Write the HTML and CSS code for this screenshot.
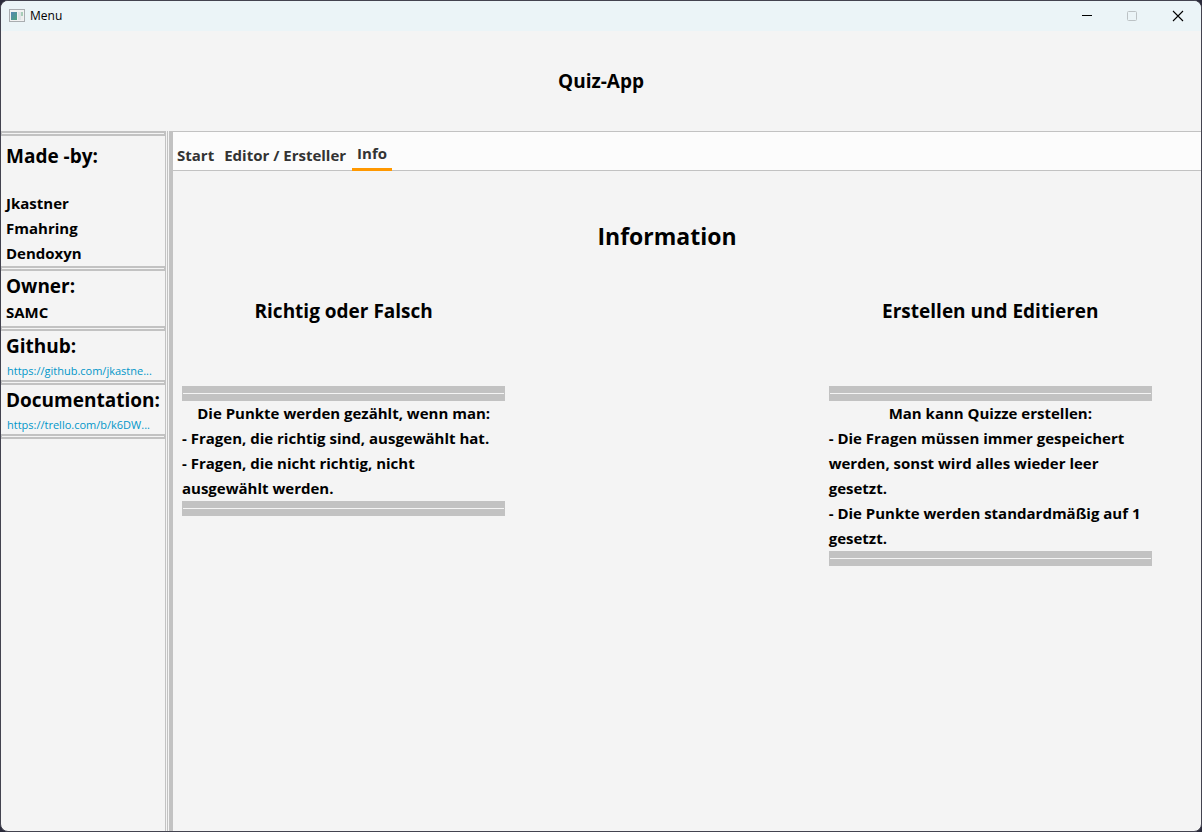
FILE: index.html
```
<!DOCTYPE html>
<html lang="de">
<head>
<meta charset="utf-8">
<title>Menu</title>
<link rel="stylesheet" href="styles.css">
</head>
<body>
<div class="window">
  <header class="titlebar">
    <svg class="app-icon" width="16" height="14" viewBox="0 0 16 14" aria-hidden="true">
      <defs><linearGradient id="pane" x1="0" y1="0" x2="1" y2="1"><stop offset="0" stop-color="#5586b4"/><stop offset="1" stop-color="#4fa27c"/></linearGradient></defs>
      <rect x="0.5" y="0.5" width="15" height="12" fill="#f2f2f2" stroke="#a9adb0"/>
      <rect x="2" y="3" width="6" height="8" fill="url(#pane)"/>
      <rect x="9" y="3" width="3" height="8" fill="#dfe3e6"/>
      <rect x="12" y="3" width="2" height="4" fill="#a8cdb8"/>
      <rect x="12" y="7" width="2" height="4" fill="#ededed"/>
    </svg>
    <span class="window-title">Menu</span>
    <div class="controls">
      <button class="control" aria-label="Minimieren"><svg width="12" height="12" viewBox="0 0 12 12"><path d="M2 5.5h10" stroke="#000"/></svg></button>
      <button class="control" aria-label="Maximieren" disabled><svg width="12" height="12" viewBox="0 0 12 12"><rect x="1.5" y="1.5" width="9" height="9" rx="1" fill="none" stroke="#bcc2c5"/></svg></button>
      <button class="control" aria-label="Schließen"><svg width="12" height="12" viewBox="0 0 12 12"><path d="M1 1l10 10M11 1L1 11" stroke="#000" stroke-width="1.1"/></svg></button>
    </div>
  </header>
  <div class="banner"><h1 class="heading">Quiz-App</h1></div>
  <div class="split">
    <aside class="sidebar">
      <div class="rule"></div>
      <section class="made">
        <h2 class="heading">Made -by:</h2>
        <p class="text">Jkastner</p>
        <p class="text">Fmahring</p>
        <p class="text">Dendoxyn</p>
      </section>
      <div class="rule"></div>
      <section class="block">
        <h2 class="heading">Owner:</h2>
        <p class="text">SAMC</p>
      </section>
      <div class="rule"></div>
      <section class="block">
        <h2 class="heading">Github:</h2>
        <a class="link" href="#github">https://github.com/jkastne...</a>
      </section>
      <div class="rule"></div>
      <section class="block">
        <h2 class="heading">Documentation:</h2>
        <a class="link" href="#trello">https://trello.com/b/k6DW...</a>
      </section>
      <div class="rule"></div>
    </aside>
    <div class="divider"></div>
    <main class="content">
      <nav class="tabs" role="tablist">
        <button class="tab" role="tab">Start</button>
        <button class="tab" role="tab">Editor / Ersteller</button>
        <button class="tab active" role="tab" aria-selected="true">Info</button>
      </nav>
      <div class="panel">
        <h2 class="page-title">Information</h2>
        <section class="column first">
          <h3 class="heading column-title">Richtig oder Falsch</h3>
          <div class="bar"></div>
          <p class="text lead">Die Punkte werden gezählt, wenn man:</p>
          <p class="text">- Fragen, die richtig sind, ausgewählt hat.</p>
          <p class="text">- Fragen, die nicht richtig, nicht<br>ausgewählt werden.</p>
          <div class="bar"></div>
        </section>
        <section class="column last">
          <h3 class="heading column-title">Erstellen und Editieren</h3>
          <div class="bar"></div>
          <p class="text lead">Man kann Quizze erstellen:</p>
          <p class="text">- Die Fragen müssen immer gespeichert<br>werden, sonst wird alles wieder leer<br>gesetzt.</p>
          <p class="text">- Die Punkte werden standardmäßig auf 1<br>gesetzt.</p>
          <div class="bar"></div>
        </section>
      </div>
    </main>
  </div>
</div>
</body>
</html>
```
FILE: styles.css
```
* { box-sizing: border-box; }
body {
  margin: 0;
  background: #2b2b3b;
  color: #000;
  font-family: "Open Sans", "Noto Sans", sans-serif;
}
h1, h2, h3, p { margin: 0; }
button { border: 0; background: none; padding: 0; font-family: inherit; }
.window {
  display: flex;
  flex-direction: column;
  min-height: 100vh;
  border: 1px solid #43434f;
  border-radius: 8px;
  background: #f4f4f4;
  overflow: hidden;
}
.titlebar {
  display: flex;
  align-items: center;
  height: 30px;
  padding-left: 8px;
  background: #ebf4f7;
}
.window-title { margin-left: 5px; font-size: 12px; line-height: 16px; }
.controls { display: flex; margin-left: auto; }
.control {
  display: flex;
  align-items: center;
  justify-content: center;
  width: 46px;
  height: 28px;
}
.banner {
  display: flex;
  align-items: center;
  justify-content: center;
  height: 100px;
}
.heading { font-size: 19px; line-height: 27px; font-weight: 700; }
.text { font-size: 15px; line-height: 25px; font-weight: 700; white-space: nowrap; }
.split { display: flex; flex: 1; }
.sidebar { width: 164px; }
.rule {
  height: 5px;
  border: solid #c2c2c2;
  border-width: 2px 1px;
  background: #f4f4f4;
}
.made { padding: 7px 5px 0; }
.made .heading { margin-bottom: 21px; }
.block { padding: 2px 5px 1px; }
.block .heading { white-space: nowrap; }
.link {
  display: block;
  padding: 2px 1px 0;
  color: #0096c9;
  font-size: 11px;
  line-height: 17px;
  text-decoration: none;
  white-space: nowrap;
}
.divider {
  width: 8px;
  background: linear-gradient(90deg, #c2c2c2 1px, #f4f4f4 1px 2px, #c2c2c2 2px 3px, #f4f4f4 3px 4px, #c2c2c2 4px);
}
.content { flex: 1; border-top: 1px solid #c2c2c2; }
.tabs {
  display: flex;
  height: 39px;
  background: linear-gradient(#c2c2c2, #c2c2c2) bottom / 100% 1px no-repeat #fcfcfc;
}
.tab {
  padding: 6px 5px 0;
  font-size: 15px;
  line-height: 20px;
  font-weight: 700;
  color: #333;
}
.tab:first-child { padding-left: 4px; }
.active { padding-top: 5px; margin-left: 1px; border-bottom: 3px solid #ff9800; }
.panel {
  display: grid;
  grid-template-columns: repeat(3, 1fr);
  align-items: start;
  padding: 47px 49px 48px 9px;
}
.page-title {
  grid-column: 2;
  text-align: center;
  font-size: 23px;
  line-height: 36px;
  font-weight: 700;
}
.column { grid-row: 2; padding-top: 44px; }
.first { grid-column: 1; }
.last { grid-column: 3; }
.column-title { margin-bottom: 61px; text-align: center; }
.lead { text-align: center; }
.bar {
  height: 15px;
  border: solid #c2c2c2;
  border-width: 7px 1px;
  background: #f4f4f4;
}
```
